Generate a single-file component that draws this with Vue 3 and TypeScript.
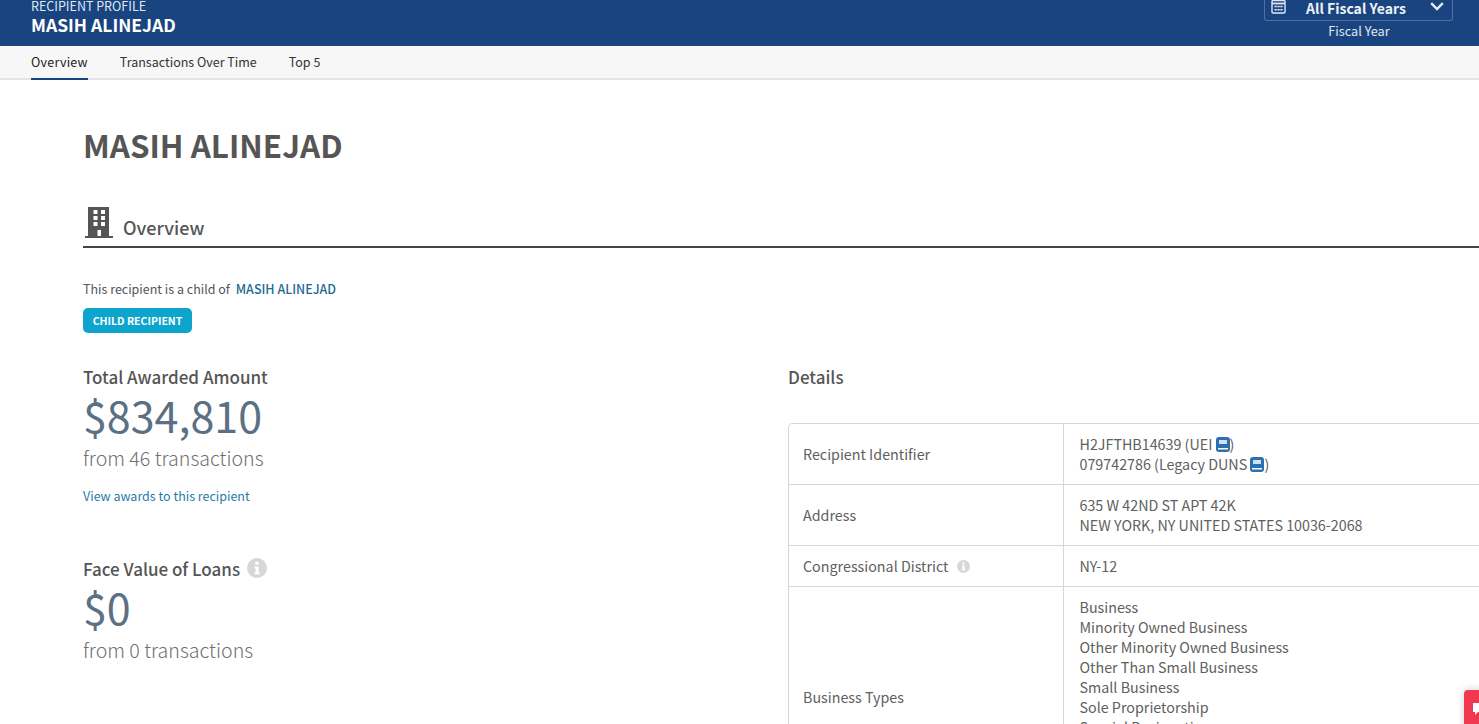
<script setup lang="ts">
const tabs: string[] = ['Overview', 'Transactions Over Time', 'Top 5']
const businessTypes: string[] = [
  'Business',
  'Minority Owned Business',
  'Other Minority Owned Business',
  'Other Than Small Business',
  'Small Business',
  'Sole Proprietorship',
  'Special Designations',
]
</script>

<template>
  <div class="page">
    <header class="topbar">
      <div class="titles">
        <div class="eyebrow">RECIPIENT PROFILE</div>
        <div class="name">MASIH ALINEJAD</div>
      </div>
      <div class="fy">
        <div class="fy-box">
          <svg class="cal" viewBox="0 0 15 15" width="15" height="15" fill="none" stroke="#dfe6f0" stroke-width="1.4">
            <rect x="1" y="1.500" width="13" height="12.500" rx="1" />
            <path d="M1 4.500h13" stroke-width="1.800" />
            <path d="M3.500 7.500h2.300M6.400 7.500h2.300M9.300 7.500h2.300M3.500 10.700h2.300M6.400 10.700h2.300M9.300 10.700h2.300" stroke-width="1.600" />
          </svg>
          <span class="fy-value">All Fiscal Years</span>
          <svg class="chev" viewBox="0 0 14 9" width="14" height="9" fill="none" stroke="#e6ecf4" stroke-width="2.4">
            <path d="M1.200 1.200 7 7l5.800-5.800" />
          </svg>
        </div>
        <div class="fy-label">Fiscal Year</div>
      </div>
    </header>

    <nav class="tabs">
      <span v-for="(t, i) in tabs" :key="t" class="tab" :class="{ active: i === 0 }">{{ t }}</span>
    </nav>

    <main class="content">
      <h1 class="heading">MASIH ALINEJAD</h1>

      <div class="section-head">
        <svg class="building" viewBox="0 0 28 31" width="28" height="31">
          <path fill-rule="evenodd" fill="#555" d="M3 0h21v29h4v2H0v-2h3zM8.500 3v4h4V3zM16 3v4h4V3zM8.500 9v4h4V9zM16 9v4h4V9zM8.500 15v4h4v-4zM16 15v4h4v-4zM12.500 23v6h3.500v-6z" />
        </svg>
        <h2 class="section-title">Overview</h2>
      </div>

      <p class="child-note">This recipient is a child of <a class="parent-link">MASIH ALINEJAD</a></p>
      <div class="badge">CHILD RECIPIENT</div>

      <div class="columns">
        <section class="left">
          <h3 class="label">Total Awarded Amount</h3>
          <div class="amount">$834,810</div>
          <div class="count">from 46 transactions</div>
          <a class="view-link">View awards to this recipient</a>

          <h3 class="label loans">
            Face Value of Loans
            <svg class="info big" viewBox="0 0 20 20" width="20" height="20">
              <circle cx="10" cy="10" r="10" fill="#d6d7d9" />
              <path fill="#fff" d="M8.200 3.800h3.400v3H8.200zM7.600 8.400h4v6h1v1.800H7.400v-1.800h1.100v-4.200h-.9z" />
            </svg>
          </h3>
          <div class="amount">$0</div>
          <div class="count">from 0 transactions</div>
        </section>

        <section class="right">
          <h3 class="label details">Details</h3>
          <div class="table">
            <div class="cell key">Recipient Identifier</div>
            <div class="cell val">
              <div>H2JFTHB14639 (UEI <svg class="book" viewBox="0 0 14 15" width="14" height="15"><rect x="0" y="0" width="14" height="15" rx="3" fill="#2e6fb0" /><rect x="3" y="3" width="8" height="4" fill="#cfe0f0" /><rect x="2" y="11" width="10" height="1.500" fill="#fff" /></svg>)</div>
              <div>079742786 (Legacy DUNS <svg class="book" viewBox="0 0 14 15" width="14" height="15"><rect x="0" y="0" width="14" height="15" rx="3" fill="#2e6fb0" /><rect x="3" y="3" width="8" height="4" fill="#cfe0f0" /><rect x="2" y="11" width="10" height="1.500" fill="#fff" /></svg>)</div>
            </div>

            <div class="cell key">Address</div>
            <div class="cell val">
              <div>635 W 42ND ST APT 42K</div>
              <div>NEW YORK, NY UNITED STATES 10036-2068</div>
            </div>

            <div class="cell key">
              Congressional District
              <svg class="info small" viewBox="0 0 20 20" width="13" height="13">
                <circle cx="10" cy="10" r="10" fill="#d6d7d9" />
                <path fill="#fff" d="M8.200 3.800h3.400v3H8.200zM7.600 8.400h4v6h1v1.800H7.400v-1.800h1.100v-4.200h-.9z" />
              </svg>
            </div>
            <div class="cell val">NY-12</div>

            <div class="cell key types-key">Business Types</div>
            <div class="cell val types-val">
              <div v-for="b in businessTypes" :key="b">{{ b }}</div>
            </div>
          </div>
        </section>
      </div>
    </main>

    <div class="feedback">
      <svg viewBox="0 0 12 12" width="12" height="12"><path fill="#fff" d="M0 0h12v9H5l-3 3V9H0z" /></svg>
    </div>
  </div>
</template>

<style>
html,
body {
  margin: 0;
  overflow: hidden;
}
</style>

<style scoped>
.page {
  position: relative;
  width: 1479px;
  height: 724px;
  overflow: hidden;
  background: #fff;
  font-family: "Noto Sans CJK SC", "Source Sans Pro", "Open Sans", sans-serif;
  color: #555;
}
.topbar {
  height: 46px;
  flex: none;
  background: #1a4480;
  display: flex;
  justify-content: space-between;
  align-items: flex-end;
  padding: 0 26px 0 31px;
  overflow: hidden;
  color: #fff;
}
.titles {
  padding-bottom: 11px;
}
.eyebrow {
  font-size: 12.500px;
  line-height: 14px;
  color: #dfe6f0;
  margin-bottom: 1px;
}
.name {
  font-size: 17.500px;
  line-height: 21px;
  font-weight: 600;
}
.fy {
  width: 189px;
  padding-bottom: 8px;
}
.fy-box {
  height: 24px;
  border: 1px solid #4f70a0;
  border-top: none;
  border-radius: 0 0 3px 3px;
  display: flex;
  align-items: center;
  padding: 0 8px 0 6px;
  margin-bottom: 3px;
  box-sizing: border-box;
}
.cal {
  margin-top: -4px;
}
.fy-value {
  flex: 1;
  text-align: center;
  font-size: 14px;
  font-weight: 600;
  margin-top: -2px;
  color: #eef2f7;
  padding-right: 4px;
}
.chev {
  margin-top: -4px;
}
.fy-label {
  text-align: center;
  font-size: 12.700px;
  line-height: 14px;
  color: #e2e8f1;
  padding-left: 1px;
}
.tabs {
  height: 34px;
  background: #f7f7f7;
  border-bottom: 2px solid #e4e4e4;
  box-sizing: border-box;
  display: flex;
  gap: 32px;
  padding-left: 31px;
}
.tab {
  height: 34px;
  box-sizing: border-box;
  font-size: 12.500px;
  line-height: 32px;
  color: #333;
}
.tab.active {
  color: #222;
  letter-spacing: 0.25px;
  border-bottom: 2px solid #1a4480;
}
.content {
  padding: 0 0 0 83px;
}
.heading {
  margin: 0;
  padding-top: 45px;
  font-size: 31.400px;
  line-height: 40px;
  font-weight: 600;
  color: #555;
}
.section-head {
  display: flex;
  align-items: flex-end;
  gap: 10px;
  margin-top: 34px;
  height: 39px;
  padding-bottom: 8px;
  box-sizing: content-box;
  border-bottom: 2px solid #444;
}
.building {
  margin-left: 2px;
}
.section-title {
  margin: 0 0 1px;
  font-size: 18px;
  line-height: 20px;
  font-weight: 500;
  color: #555;
}
.child-note {
  margin: 32px 0 0;
  font-size: 12.500px;
  line-height: 18px;
  color: #555;
}
.parent-link {
  margin-left: 3px;
  font-weight: 500;
  color: #1f6a94;
}
.badge {
  margin-top: 10px;
  width: 109px;
  height: 25px;
  border-radius: 5px;
  background: #0ea5cd;
  color: #fff;
  font-size: 10.500px;
  font-weight: 600;
  line-height: 25px;
  text-align: center;
}
.columns {
  display: flex;
  margin-top: 32px;
}
.left {
  width: 705px;
  flex: none;
}
.right {
  flex: 1;
}
.label {
  margin: 0;
  font-size: 17px;
  line-height: 24px;
  font-weight: 500;
  color: #555;
}
.loans {
  margin-top: 52px;
  display: flex;
  align-items: center;
  gap: 7px;
}
.info.big {
  margin-top: -3px;
}
.amount {
  font-size: 43px;
  line-height: 54px;
  font-weight: 400;
  color: #5b7083;
  margin-top: -2px;
}
.count {
  font-size: 19.600px;
  line-height: 28px;
  font-weight: 300;
  color: #707070;
  margin-top: 3px;
}
.view-link {
  display: block;
  margin-top: 15px;
  font-size: 12.500px;
  line-height: 18px;
  color: #2a7ba8;
}
.details {
  margin-bottom: 34px;
}
.table {
  width: 760px;
  display: grid;
  grid-template-columns: 274px 1fr;
  border: 1px solid #d6d7d9;
  border-radius: 4px;
  font-size: 14.300px;
  line-height: 20px;
  font-weight: 400;
  color: #606060;
}
.cell {
  padding: 10px 15px 10px 14px;
  border-bottom: 1px solid #d6d7d9;
  display: flex;
  flex-direction: column;
  justify-content: center;
}
.val {
  border-left: 1px solid #d6d7d9;
  padding-left: 15.500px;
}
.key {
  flex-direction: row;
  justify-content: flex-start;
  align-items: center;
  gap: 9px;
}
.types-key,
.types-val {
  min-height: 200px;
}
.types-val {
  justify-content: flex-start;
}
.book {
  width: 14px;
  height: 15px;
  vertical-align: -2px;
}
.feedback {
  position: absolute;
  left: 1464px;
  top: 690px;
  width: 40px;
  height: 60px;
  border-radius: 4px 0 0 4px;
  background: #f0384f;
  padding: 13px 0 0 9px;
  box-sizing: border-box;
  box-shadow: 0 0 8px rgba(0, 0, 0, 0.18);
}
.feedback svg {
  display: block;
}
</style>
